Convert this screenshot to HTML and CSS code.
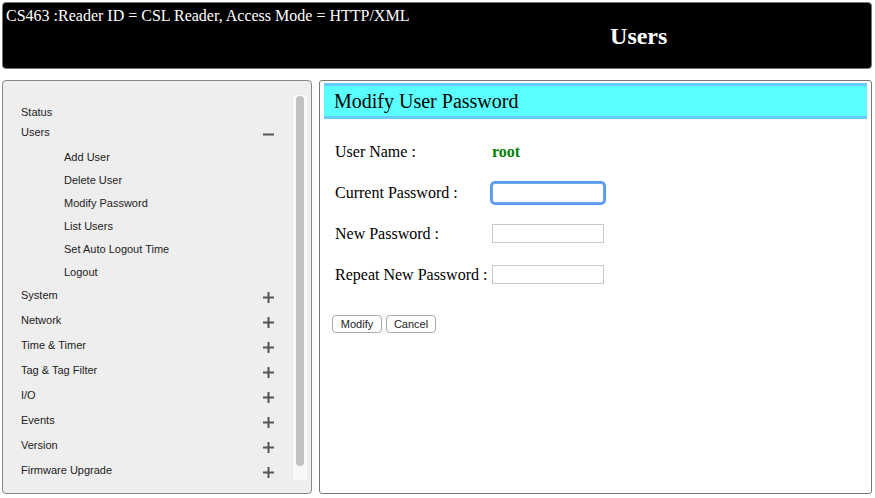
FILE: index.html
```html
<!DOCTYPE html>
<html>
<head>
<meta charset="utf-8">
<title>Users</title>
<link rel="stylesheet" href="styles.css">
</head>
<body>
<div class="page">
  <header class="topbar">
    <div class="reader-info">CS463 :Reader ID = CSL Reader, Access Mode = HTTP/XML</div>
    <div class="page-title">Users</div>
  </header>
  <div class="main">
    <nav class="side">
      <div class="side-scroll">
        <ul class="menu">
          <li class="item item-first"><span>Status</span></li>
          <li class="item item-first"><span>Users</span>
            <svg class="ico" width="11" height="11" viewBox="0 0 11 11"><rect x="0" y="4.5" width="11" height="2" fill="#555"/></svg>
          </li>
          <li class="sub">
            <ul class="submenu">
              <li class="sub-item">Add User</li>
              <li class="sub-item">Delete User</li>
              <li class="sub-item">Modify Password</li>
              <li class="sub-item">List Users</li>
              <li class="sub-item">Set Auto Logout Time</li>
              <li class="sub-item">Logout</li>
            </ul>
          </li>
          <li class="item"><span>System</span><svg class="ico" width="11" height="11" viewBox="0 0 11 11"><rect x="0" y="4.5" width="11" height="2" fill="#555"/><rect x="4.5" y="0" width="2" height="11" fill="#555"/></svg></li>
          <li class="item"><span>Network</span><svg class="ico" width="11" height="11" viewBox="0 0 11 11"><rect x="0" y="4.5" width="11" height="2" fill="#555"/><rect x="4.5" y="0" width="2" height="11" fill="#555"/></svg></li>
          <li class="item"><span>Time &amp; Timer</span><svg class="ico" width="11" height="11" viewBox="0 0 11 11"><rect x="0" y="4.5" width="11" height="2" fill="#555"/><rect x="4.5" y="0" width="2" height="11" fill="#555"/></svg></li>
          <li class="item"><span>Tag &amp; Tag Filter</span><svg class="ico" width="11" height="11" viewBox="0 0 11 11"><rect x="0" y="4.5" width="11" height="2" fill="#555"/><rect x="4.5" y="0" width="2" height="11" fill="#555"/></svg></li>
          <li class="item"><span>I/O</span><svg class="ico" width="11" height="11" viewBox="0 0 11 11"><rect x="0" y="4.5" width="11" height="2" fill="#555"/><rect x="4.5" y="0" width="2" height="11" fill="#555"/></svg></li>
          <li class="item"><span>Events</span><svg class="ico" width="11" height="11" viewBox="0 0 11 11"><rect x="0" y="4.5" width="11" height="2" fill="#555"/><rect x="4.5" y="0" width="2" height="11" fill="#555"/></svg></li>
          <li class="item"><span>Version</span><svg class="ico" width="11" height="11" viewBox="0 0 11 11"><rect x="0" y="4.5" width="11" height="2" fill="#555"/><rect x="4.5" y="0" width="2" height="11" fill="#555"/></svg></li>
          <li class="item"><span>Firmware Upgrade</span><svg class="ico" width="11" height="11" viewBox="0 0 11 11"><rect x="0" y="4.5" width="11" height="2" fill="#555"/><rect x="4.5" y="0" width="2" height="11" fill="#555"/></svg></li>
        </ul>
        <div class="scrollbar"><div class="thumb"></div></div>
      </div>
    </nav>
    <section class="content">
      <h2 class="content-title">Modify User Password</h2>
      <div class="form">
        <div class="label">User Name :</div>
        <div class="value"><span class="username">root</span></div>
        <div class="label">Current Password :</div>
        <div class="value"><input class="field field-focus" type="password"></div>
        <div class="label">New Password :</div>
        <div class="value"><input class="field" type="password"></div>
        <div class="label">Repeat New Password :</div>
        <div class="value"><input class="field" type="password"></div>
      </div>
      <div class="buttons">
        <button class="btn">Modify</button>
        <button class="btn">Cancel</button>
      </div>
    </section>
  </div>
</div>
</body>
</html>
```
FILE: styles.css
```css
html, body {
  margin: 0;
  padding: 0;
  background: #fff;
}
.page {
  padding: 2px 3px 0 2px;
  display: flex;
  flex-direction: column;
  gap: 11px;
}
.topbar {
  height: 65px;
  background: #000;
  border: 1px solid #777;
  border-radius: 4px;
  display: flex;
  color: #fff;
  font-family: "Liberation Serif", "Times New Roman", serif;
}
.reader-info {
  font-size: 16px;
  line-height: 18px;
  padding: 4px 0 0 3px;
  align-self: flex-start;
  white-space: nowrap;
}
.page-title {
  flex: 1;
  text-align: center;
  align-self: center;
  font-size: 24px;
  font-weight: bold;
  line-height: 28px;
  padding-right: 3px;
}
.main {
  display: flex;
  gap: 7px;
  height: 414px;
}
.side {
  width: 296px;
  flex: none;
  background: #eee;
  border: 1px solid #888;
  border-radius: 4px;
  padding: 14px 4px 13px 8px;
}
.side-scroll {
  display: flex;
  height: 385px;
  overflow: hidden;
}
.menu {
  list-style: none;
  margin: 0;
  padding: 7px 0 0 0;
  flex: 1;
  font-family: "Liberation Sans", Arial, sans-serif;
  font-size: 11px;
  color: #222;
}
.item {
  height: 25px;
  display: flex;
  align-items: center;
  justify-content: space-between;
  padding: 0 18px 0 10px;
}
.item-first {
  height: 20px;
}
.ico {
  margin-top: 5px;
  display: block;
}
.submenu {
  list-style: none;
  margin: 0 0 -2px 0;
  padding: 4px 0 0 0;
}
.sub-item {
  height: 23px;
  line-height: 23px;
  padding-left: 53px;
}
.scrollbar {
  width: 15px;
  flex: none;
  background: #f8f8f8;
  border-left: 1px solid #e8e8e8;
  box-sizing: border-box;
  padding: 1px 3px 0 3px;
}
.thumb {
  height: 370px;
  background: #c1c1c1;
  border-radius: 4px;
}
.content {
  flex: 1;
  background: #fff;
  border: 1px solid #777;
  border-radius: 3px;
  padding: 2px 4px 0 4px;
  font-family: "Liberation Serif", "Times New Roman", serif;
  color: #000;
}
.content-title {
  margin: 0;
  background: #5cffff;
  border-top: 3px solid #66ccff;
  border-bottom: 3px solid #66ccff;
  height: 30px;
  line-height: 30px;
  font-size: 20px;
  font-weight: normal;
  padding-left: 10px;
}
.form {
  display: grid;
  grid-template-columns: 157px 1fr;
  grid-auto-rows: 41px;
  margin-top: 12px;
  padding-left: 11px;
  font-size: 16px;
}
.label, .value {
  display: flex;
  align-items: center;
}
.username {
  color: #008000;
  font-weight: bold;
}
.field {
  width: 112px;
  height: 19px;
  box-sizing: border-box;
  border: 1px solid #c8c8c8;
  margin: 0;
  padding: 0 2px;
  background: #fff;
}
.field-focus {
  height: 20px;
  border: 1px solid #6fa6ee;
  border-radius: 3px;
  box-shadow: 0 0 0 2px #5b9cf5;
  outline: none;
}
.buttons {
  display: flex;
  gap: 4px;
  margin-top: 20px;
  padding-left: 8px;
}
.btn {
  width: 50px;
  height: 18px;
  padding: 0;
  font-family: "Liberation Sans", Arial, sans-serif;
  font-size: 11px;
  color: #222;
  background: #fff;
  border: 1px solid #aaa;
  border-radius: 4px;
}
```
